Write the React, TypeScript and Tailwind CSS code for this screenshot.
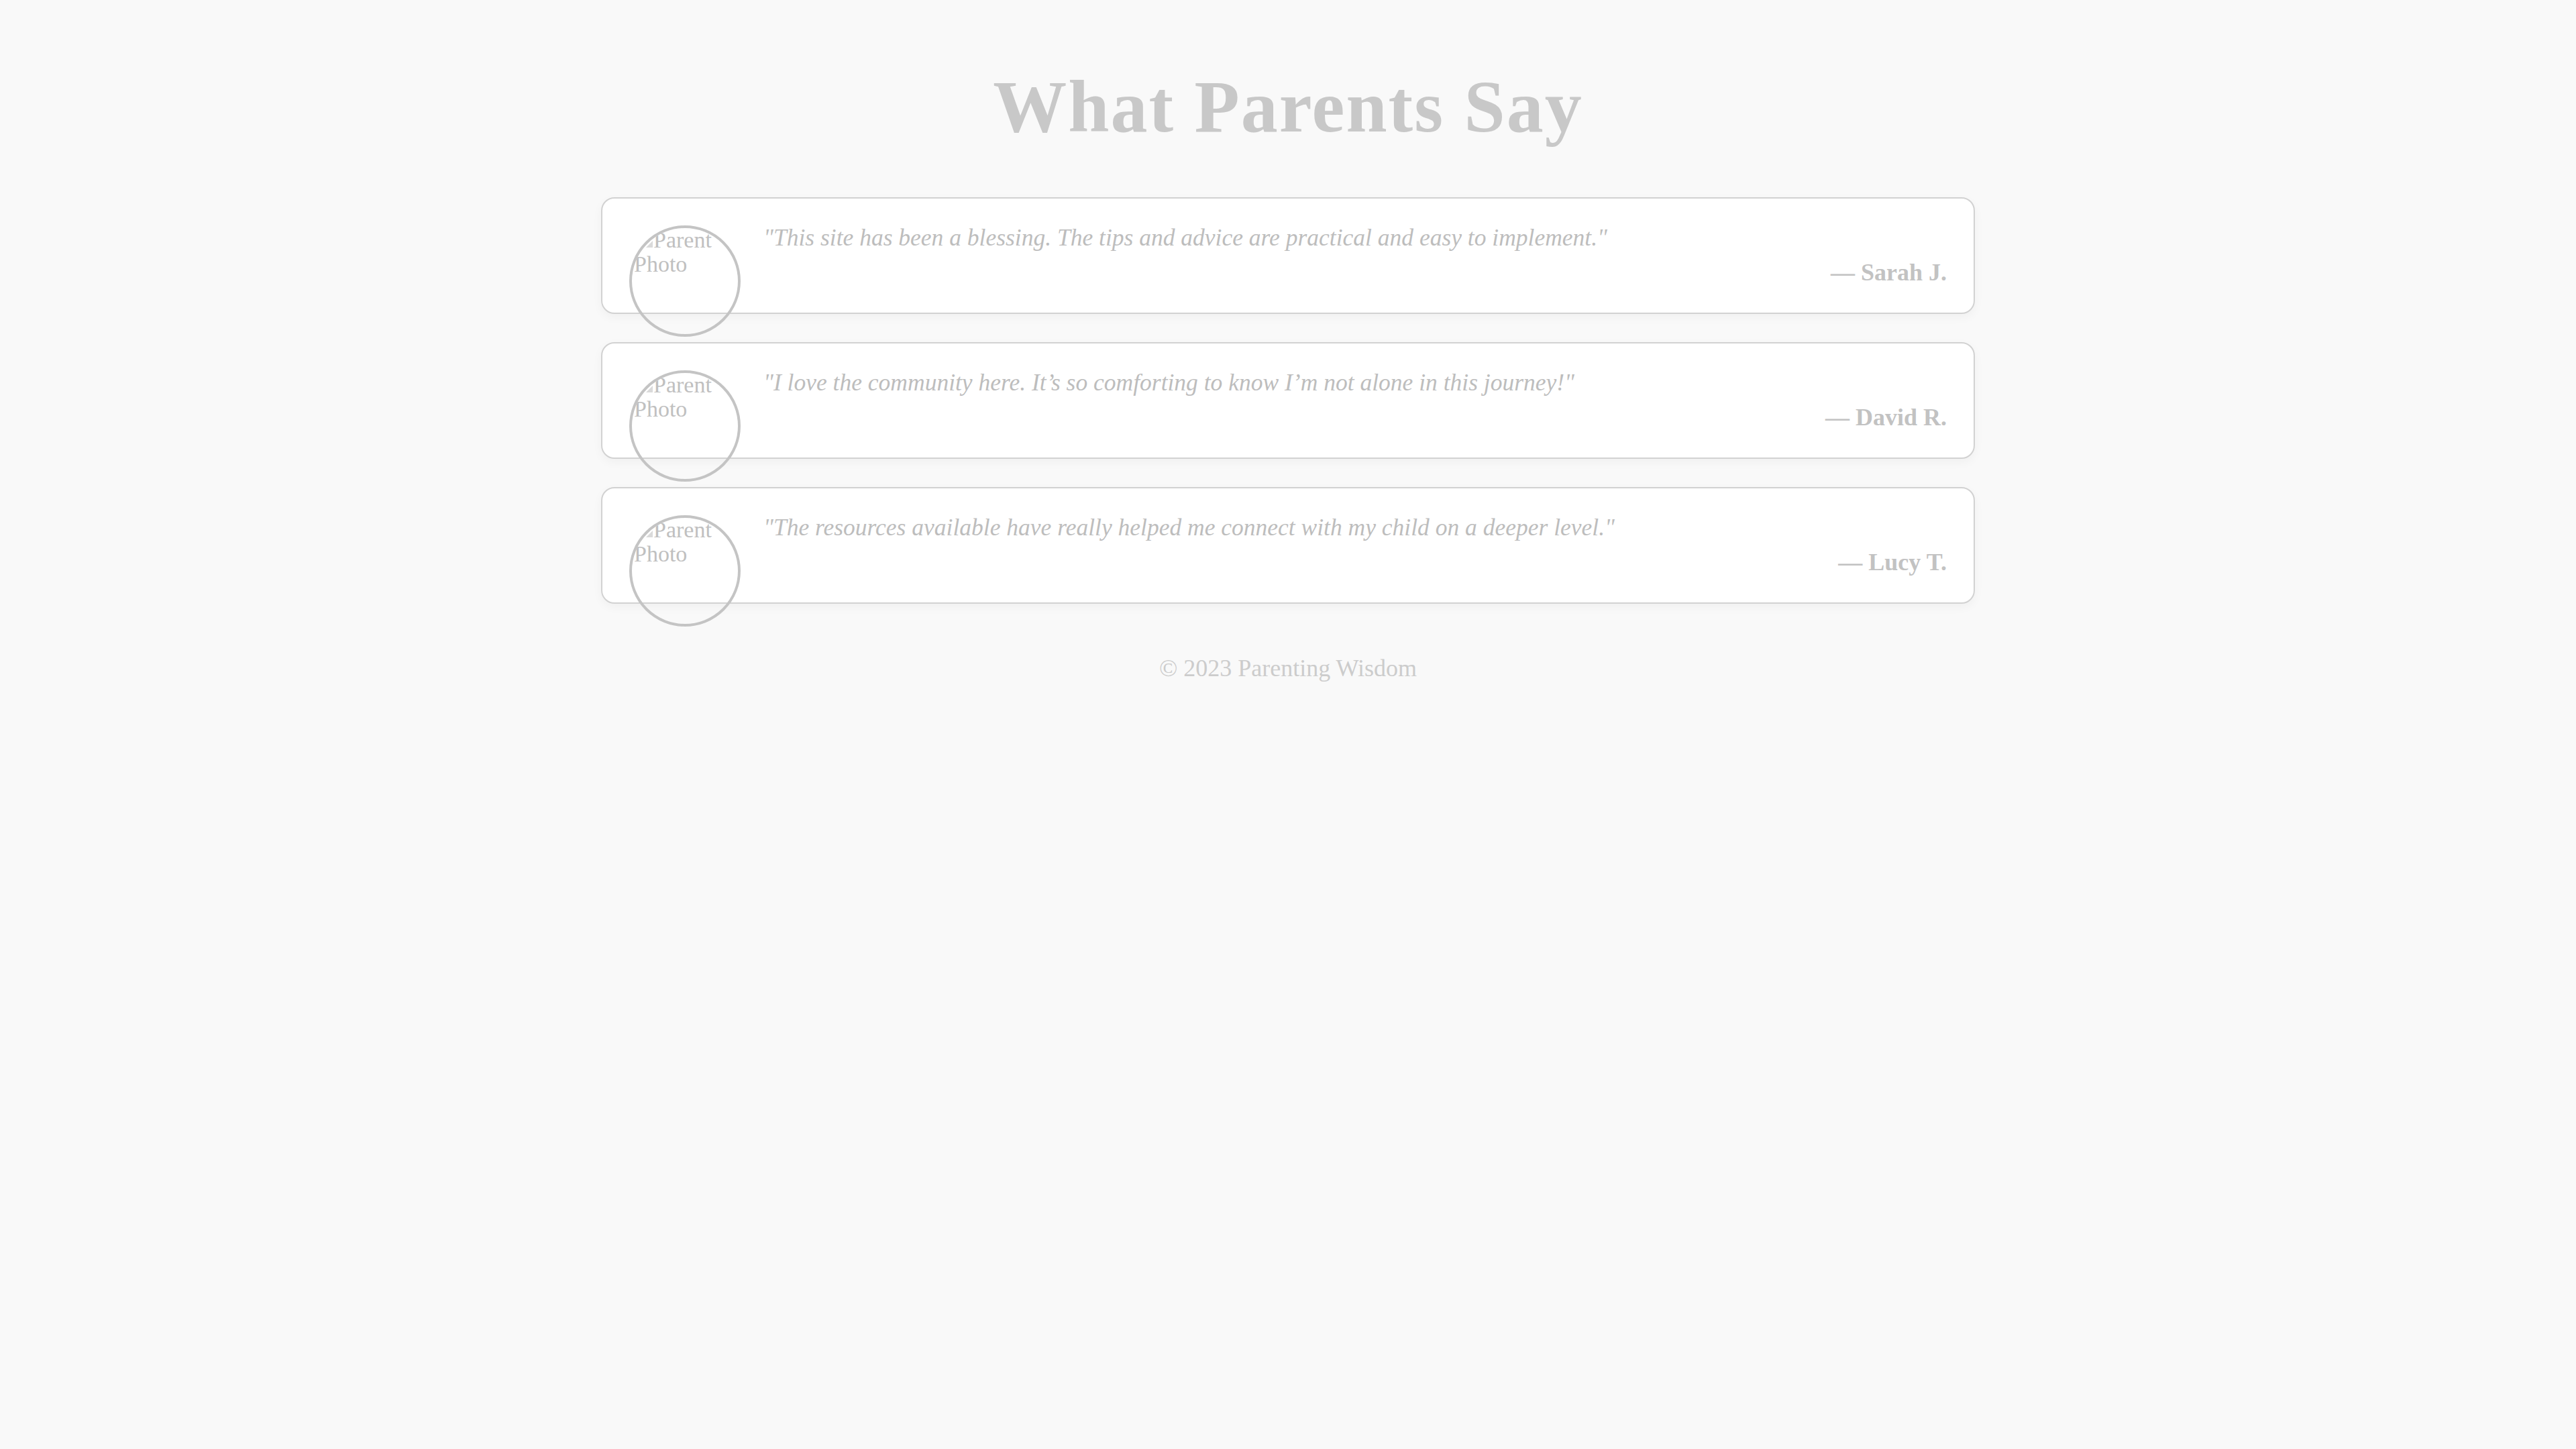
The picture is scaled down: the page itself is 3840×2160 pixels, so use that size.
import type { ReactNode } from "react";

type Testimonial = {
  quote: string;
  author: string;
};

const testimonials: Testimonial[] = [
  {
    quote:
      "\"This site has been a blessing. The tips and advice are practical and easy to implement.\"",
    author: "— Sarah J.",
  },
  {
    quote:
      "\"I love the community here. It’s so comforting to know I’m not alone in this journey!\"",
    author: "— David R.",
  },
  {
    quote:
      "\"The resources available have really helped me connect with my child on a deeper level.\"",
    author: "— Lucy T.",
  },
];

function BrokenPhoto() {
  return (
    <div className="float-left mr-[34px] h-[166px] w-[166px] overflow-hidden rounded-full border-[4px] border-[#c4c4c4] text-[34px] leading-[36px] text-[#c0c0c0]">
      <div className="pl-[3px]">
        <span className="inline-flex items-center pl-[18px]">
          <svg width="10" height="10" viewBox="0 0 10 10" className="mr-[1px] mt-[12px]">
            <polygon points="0,10 10,0 10,10" fill="#dadada" />
          </svg>
          Parent
        </span>
        <br />
        Photo
      </div>
    </div>
  );
}

function Card({ children }: { children: ReactNode }) {
  // plain block on purpose: the floated photo hangs out below the card
  return (
    <div className="rounded-[20px] border-2 border-[#d2d2d2] bg-white p-[40px] shadow-[0_5px_15px_rgba(0,0,0,0.04)]">
      {children}
    </div>
  );
}

export default function App() {
  return (
    <div className="min-h-screen bg-[#f9f9f9] pt-[104px] font-['Liberation_Serif',serif]">
      <h1 className="text-center text-[110px] font-bold leading-none tracking-[2px] text-[#c8c8c8]">
        What Parents Say
      </h1>

      <div className="mx-auto mt-[80px] w-[2048px] space-y-[42px]">
        {testimonials.map((t) => (
          <Card key={t.author}>
            <BrokenPhoto />
            <p className="text-[35.5px] italic leading-[36px] text-[#bdbdbd]">
              {t.quote}
            </p>
            <p className="mt-[15px] text-right text-[36px] font-bold leading-[39px] text-[#c2c2c2]">
              {t.author}
            </p>
          </Card>
        ))}
      </div>

      <footer className="mt-[76px] text-center text-[36px] leading-[41px] text-[#cccccc]">
        © 2023 Parenting Wisdom
      </footer>
    </div>
  );
}
